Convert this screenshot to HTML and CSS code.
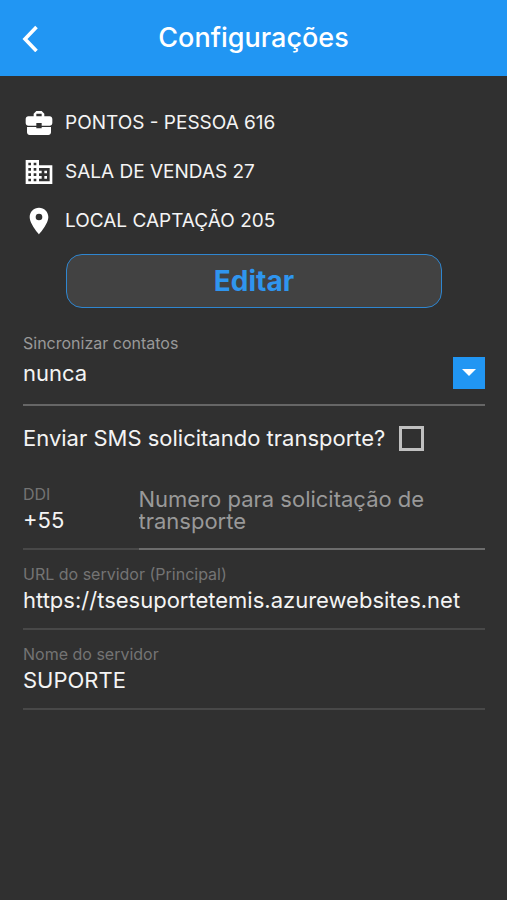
FILE: index.html
```html
<!DOCTYPE html>
<html lang="pt-BR">
<head>
<meta charset="utf-8">
<meta name="viewport" content="width=device-width, initial-scale=1">
<title>Configurações</title>
<link rel="stylesheet" href="styles.css">
</head>
<body>
<header class="app-bar">
  <button class="back" type="button" aria-label="Voltar">
    <svg viewBox="0 0 18 28" width="18" height="28"><path d="M15.500 3 4 15 15.500 27" fill="none" stroke="currentColor" stroke-width="3.600"/></svg>
  </button>
  <h1 class="title">Configurações</h1>
</header>
<main class="content">
  <ul class="places">
    <li class="place">
      <svg class="place-icon" viewBox="0 0 24 24"><path d="M10 16v-1H3.010L3 19c0 1.110.89 2 2 2h14c1.110 0 2-.89 2-2v-4h-7v1h-4zm10-9h-4.010V5l-2-2h-4l-2 2v2H4c-1.100 0-2 .9-2 2v3c0 1.110.89 2 2 2h6v-2h4v2h6c1.100 0 2-.9 2-2V9c0-1.100-.9-2-2-2zm-6 0h-4V5h4v2z"/></svg>
      <span>PONTOS - PESSOA 616</span>
    </li>
    <li class="place">
      <svg class="place-icon" viewBox="0 0 24 24"><path d="M12 7V3H2v18h20V7H12zM6 19H4v-2h2v2zm0-4H4v-2h2v2zm0-4H4V9h2v2zm0-4H4V5h2v2zm4 12H8v-2h2v2zm0-4H8v-2h2v2zm0-4H8V9h2v2zm0-4H8V5h2v2zm10 12h-8v-2h2v-2h-2v-2h2v-2h-2V9h8v10zm-2-8h-2v2h2v-2zm0 4h-2v2h2v-2z"/></svg>
      <span>SALA DE VENDAS 27</span>
    </li>
    <li class="place">
      <svg class="place-icon" viewBox="0 0 24 24"><path d="M12 2C8.130 2 5 5.130 5 9c0 5.250 7 13 7 13s7-7.750 7-13c0-3.870-3.130-7-7-7zm0 9.500a2.500 2.500 0 0 1 0-5 2.500 2.500 0 0 1 0 5z"/></svg>
      <span>LOCAL CAPTAÇÃO 205</span>
    </li>
  </ul>
  <button class="edit" type="button">Editar</button>
  <form class="settings">
    <div class="field field-select">
      <label class="label" for="sync">Sincronizar contatos</label>
      <div class="select-box">
        <select class="value select" id="sync"><option>nunca</option></select>
        <span class="arrow"><svg viewBox="0 0 14 8" width="14" height="8"><path d="M0 0h14L7 7z" fill="currentColor"/></svg></span>
      </div>
    </div>
    <div class="check-row">
      <label for="sms">Enviar SMS solicitando transporte?</label>
      <input class="check" type="checkbox" id="sms">
    </div>
    <div class="phone">
      <div class="field">
        <label class="label" for="ddi">DDI</label>
        <input class="value" id="ddi" value="+55">
      </div>
      <div class="field field-number">
        <textarea class="number" rows="2" aria-label="Numero para solicitação de transporte" placeholder="Numero para solicitação de transporte"></textarea>
      </div>
    </div>
    <div class="field">
      <label class="label" for="url">URL do servidor (Principal)</label>
      <input class="value" id="url" value="https://tsesuportetemis.azurewebsites.net">
    </div>
    <div class="field">
      <label class="label" for="server">Nome do servidor</label>
      <input class="value" id="server" value="SUPORTE">
    </div>
  </form>
</main>
</body>
</html>
```
FILE: styles.css
```css
* { box-sizing: border-box; }

body {
  margin: 0;
  min-height: 100vh;
  background: #303030;
  color: #f4f4f4;
  font-family: Inter, Roboto, sans-serif;
  font-size: 22px;
  line-height: 24px;
}

button, input, select, textarea {
  margin: 0;
  padding: 0;
  border: 0;
  background: none;
  color: inherit;
  font: inherit;
  outline: none;
}

.app-bar {
  display: grid;
  grid-template-columns: 44px 1fr 44px;
  align-items: center;
  height: 76px;
  padding: 0 16px;
  background: #2196f3;
  color: #fff;
}

.back {
  display: flex;
  padding-left: 5px;
}

.title {
  margin: 0;
  font-size: 27px;
  font-weight: 500;
  line-height: 32px;
  text-align: center;
}

.content { padding: 22px 22px 22px 23px; }

.places {
  margin: 0;
  padding: 0;
  list-style: none;
  font-size: 19px;
}

.place {
  display: flex;
  align-items: center;
  gap: 10px;
  height: 49px;
}

.place-icon {
  width: 32px;
  height: 32px;
  fill: #fff;
}

.edit {
  display: block;
  width: calc(100% - 86px);
  height: 54px;
  margin: 9px auto 0;
  border: 1px solid #2f86d0;
  border-radius: 16px;
  background: #424242;
  color: #2f95ee;
  font-size: 28px;
  font-weight: 700;
}

.field {
  display: flex;
  flex-direction: column;
  gap: 4px;
  padding: 14px 0 16px;
  border-bottom: 2px solid #484848;
}

.label {
  color: #747474;
  font-size: 16px;
  line-height: 20px;
}

.value {
  width: 100%;
  height: 24px;
}

.field-select {
  padding: 25px 0 15px;
  border-color: #666;
}

.field-select .label { color: #999; }

.select-box {
  display: grid;
  align-items: center;
}

.select, .arrow { grid-area: 1 / 1; }

.select {
  height: 32px;
  appearance: none;
}

.arrow {
  display: flex;
  align-items: center;
  justify-content: center;
  justify-self: end;
  width: 32px;
  height: 32px;
  background: #2196f3;
  color: #fff;
  pointer-events: none;
}

.check-row {
  display: flex;
  align-items: center;
  gap: 14px;
  height: 64px;
}

.check {
  width: 25px;
  height: 25px;
  border: 3px solid #c0c0c0;
  appearance: none;
}

.phone {
  display: grid;
  grid-template-columns: 1fr 3fr;
}

.field-number {
  padding: 18px 0 12px;
  border-color: #6c6c6c;
}

.number {
  width: 100%;
  height: 48px;
  line-height: 22px;
  resize: none;
}

.number::placeholder { color: #999; }
```
